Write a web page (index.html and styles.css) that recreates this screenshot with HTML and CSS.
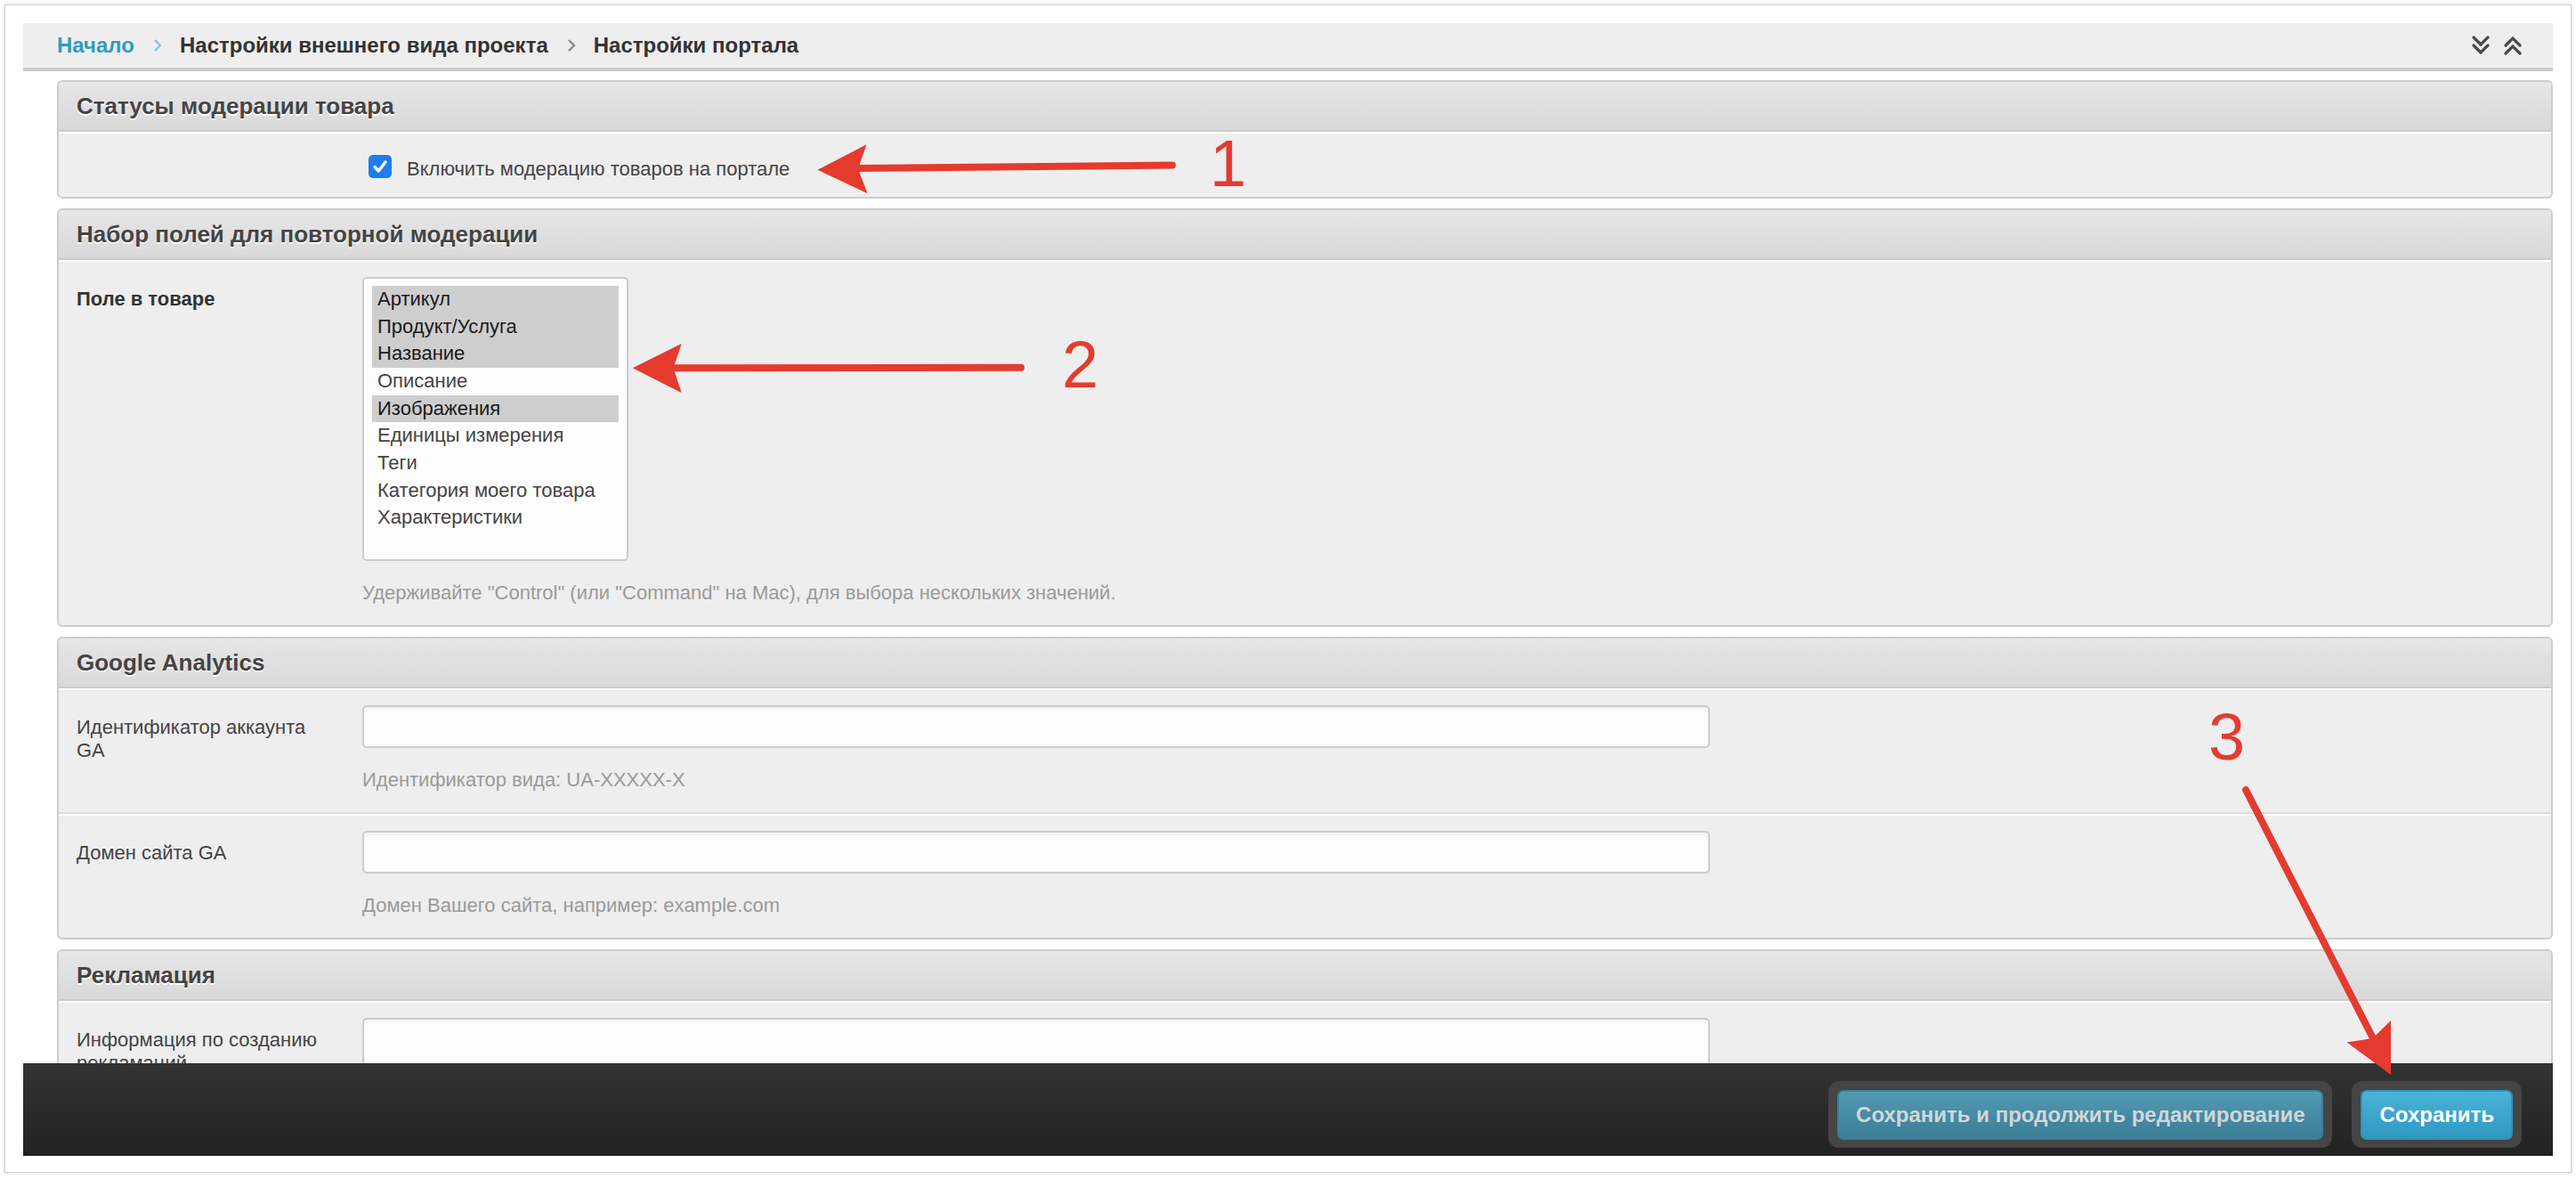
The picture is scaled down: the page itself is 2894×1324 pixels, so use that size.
FILE: index.html
```html
<!DOCTYPE html>
<html lang="ru">
<head>
<meta charset="utf-8">
<title>Настройки портала</title>
<link rel="stylesheet" href="styles.css">
</head>
<body>
<div class="frame">
  <div class="breadcrumbs">
    <div class="crumbs">
      <span class="crumb-home">Начало</span>
      <svg class="sep sep-blue" viewBox="0 0 10 14" width="10" height="14"><polyline points="2,1 8,7 2,13" fill="none" stroke-width="2.4"/></svg>
      <span>Настройки внешнего вида проекта</span>
      <svg class="sep" viewBox="0 0 10 14" width="10" height="14"><polyline points="2,1 8,7 2,13" fill="none" stroke-width="2.4"/></svg>
      <span>Настройки портала</span>
    </div>
    <div class="tools">
      <svg class="tool" viewBox="0 0 22 22" width="22" height="22"><polyline points="3,2 11,10 19,2" /><polyline points="3,11 11,19 19,11" /></svg>
      <svg class="tool" viewBox="0 0 22 22" width="22" height="22"><polyline points="3,11 11,3 19,11" /><polyline points="3,20 11,12 19,20" /></svg>
    </div>
  </div>

  <div class="viewport">
    <div class="content">
      <div class="module">
        <h2>Статусы модерации товара</h2>
        <div class="row check-row">
          <div class="label"></div>
          <div class="field check-line">
            <span class="checkbox"><svg viewBox="0 0 26 26" width="26" height="26"><polyline points="7,13.5 11.3,18 19,8" fill="none" stroke="#fff" stroke-width="3.4" stroke-linecap="round" stroke-linejoin="round"/></svg></span>
            <span class="check-text">Включить модерацию товаров на портале</span>
          </div>
        </div>
      </div>

      <div class="module">
        <h2>Набор полей для повторной модерации</h2>
        <div class="row">
          <div class="label bold">Поле в товаре</div>
          <div class="field">
            <div class="select">
              <div class="option sel">Артикул</div>
              <div class="option sel">Продукт/Услуга</div>
              <div class="option sel">Название</div>
              <div class="option">Описание</div>
              <div class="option sel">Изображения</div>
              <div class="option">Единицы измерения</div>
              <div class="option">Теги</div>
              <div class="option">Категория моего товара</div>
              <div class="option">Характеристики</div>
            </div>
            <p class="help">Удерживайте "Control" (или "Command" на Mac), для выбора нескольких значений.</p>
          </div>
        </div>
      </div>

      <div class="module">
        <h2>Google Analytics</h2>
        <div class="row">
          <div class="label">Идентификатор аккаунта GA</div>
          <div class="field">
            <div class="input"></div>
            <p class="help">Идентификатор вида: UA-XXXXX-X</p>
          </div>
        </div>
        <div class="row">
          <div class="label">Домен сайта GA</div>
          <div class="field">
            <div class="input"></div>
            <p class="help">Домен Вашего сайта, например: example.com</p>
          </div>
        </div>
      </div>

      <div class="module">
        <h2>Рекламация</h2>
        <div class="row">
          <div class="label">Информация по созданию рекламаций</div>
          <div class="field">
            <div class="input textarea"></div>
          </div>
        </div>
      </div>
    </div>
  </div>

  <div class="submit-row">
    <div class="btn-frame"><span class="btn btn-continue">Сохранить и продолжить редактирование</span></div>
    <div class="btn-frame"><span class="btn btn-save">Сохранить</span></div>
  </div>
</div>

<svg class="annotations" viewBox="0 0 2894 1324" width="2894" height="1324">
  <g fill="#e53b2f" stroke="#e53b2f">
    <line x1="1317" y1="185.5" x2="962" y2="189" stroke-width="8" stroke-linecap="round"/>
    <polygon points="918.5,190.7 973.6,162.3 964,189.5 974.6,217.3" stroke="none"/>
    <line x1="1147" y1="412.7" x2="755" y2="413.3" stroke-width="8" stroke-linecap="round"/>
    <polygon points="710.6,413.3 765.7,386 756.5,413.3 765.7,441" stroke="none"/>
    <line x1="2523" y1="887" x2="2667" y2="1168" stroke-width="8" stroke-linecap="round"/>
    <polygon points="2686,1207 2636.7,1170.5 2665.5,1166 2686,1146" stroke="none"/>
  </g>
  <g class="num" fill="#e53b2f">
    <text x="1359" y="209">1</text>
    <text x="1193" y="435">2</text>
    <text x="2481" y="853">3</text>
  </g>
</svg>
</body>
</html>
```

FILE: styles.css
```css
html, body {
  margin: 0;
}

body {
  padding: 5px;
  background: #ffffff;
  font-family: "Liberation Sans", Arial, sans-serif;
  position: relative;
}

.frame {
  border: 1px solid #d2d2d2;
  box-shadow: 0 0 4px rgba(0, 0, 0, 0.18);
  padding: 20px 20px 18px 20px;
  background: #ffffff;
}

/* breadcrumbs */
.breadcrumbs {
  height: 50px;
  background: #eeeeee;
  border-bottom: 4px solid #cccccc;
  display: flex;
  align-items: center;
  padding: 0 34px 0 38px;
  font-size: 24px;
  font-weight: bold;
  color: #333333;
}

.crumbs {
  display: flex;
  align-items: center;
  flex: 1;
}

.crumb-home {
  color: #309bbf;
}

.sep {
  margin: 0 20px 0 21px;
  stroke: #8a8a8a;
}

.sep-blue {
  stroke: #8cc3d8;
}

.tools {
  display: flex;
  gap: 14px;
}

.tool {
  fill: none;
  stroke: #4a4a4a;
  stroke-width: 3.2;
  stroke-linecap: round;
  stroke-linejoin: miter;
}

/* content */
.viewport {
  height: 1114px;
  overflow: hidden;
}

.content {
  padding: 10px 0 0 38px;
}

.module {
  border: 2px solid #cccccc;
  border-radius: 6px;
  margin-bottom: 11px;
  background: #eeeeee;
  overflow: hidden;
}

.module h2 {
  margin: 0;
  height: 54px;
  line-height: 54px;
  padding: 0 20px;
  font-size: 26px;
  font-weight: bold;
  color: #444444;
  text-shadow: 0 2px 0 #ffffff;
  background: linear-gradient(#e6e6e6, #d9d9d9);
  border-bottom: 2px solid #cccccc;
}

.row {
  display: flex;
  padding: 17px 20px 23px 20px;
  border-top: 2px solid #ffffff;
}

.row:not(:last-child) {
  border-bottom: 2px solid #dddddd;
}

.row.check-row {
  padding-bottom: 16px;
}

.label {
  width: 280px;
  margin-right: 41px;
  flex: none;
  padding-top: 12px;
  line-height: 26px;
  font-size: 22px;
  color: #444444;
}

.label.bold {
  font-weight: bold;
  color: #333333;
}

.field {
  flex: 1;
}

.check-line {
  display: flex;
  align-items: flex-start;
  padding-top: 7px;
  height: 31px;
}

.checkbox {
  width: 26px;
  height: 26px;
  border-radius: 5px;
  background: #1f7cf3;
  margin-left: 7px;
  display: flex;
}

.check-text {
  margin-left: 17px;
  line-height: 31px;
  font-size: 22px;
  color: #444444;
}

.select {
  width: 299px;
  height: 319px;
  box-sizing: border-box;
  border: 2px solid #cccccc;
  border-radius: 5px;
  background: #fdfdfd;
  padding: 8px 9px;
}

.option {
  height: 30.67px;
  line-height: 30.67px;
  padding-left: 6px;
  font-size: 22px;
  color: #444444;
}

.option.sel {
  background: #cecece;
  color: #1a1a1a;
}

.help {
  margin: 23px 0 0 0;
  line-height: 26px;
  font-size: 22px;
  color: #9a9a9a;
}

.input {
  width: 1514px;
  height: 48px;
  box-sizing: border-box;
  border: 2px solid #cccccc;
  border-radius: 5px;
  background: #fcfcfc;
  box-shadow: inset 0 3px 3px rgba(0, 0, 0, 0.04);
}

.input.textarea {
  height: 140px;
}

/* footer */
.submit-row {
  height: 104px;
  box-sizing: border-box;
  background: linear-gradient(#333333, #222222);
  display: flex;
  justify-content: flex-end;
  align-items: flex-start;
  gap: 22px;
  padding: 20px 35px 0 0;
}

.btn-frame {
  background: #454545;
  border-radius: 12px;
  padding: 10px 10px 9px 10px;
}

.btn {
  display: block;
  height: 56px;
  box-sizing: border-box;
  padding: 0 19px;
  border-radius: 7px;
  font-size: 24px;
  font-weight: bold;
  line-height: 52px;
}

.btn-continue {
  border: 2px solid #3a7f95;
  background: linear-gradient(#5199b1, #3b7f97);
  color: #d2d6d8;
}

.btn-save {
  border: 2px solid #2f93bb;
  background: linear-gradient(#4cb3d8, #2e99c2);
  color: #ffffff;
}

/* annotation overlay */
.annotations {
  position: absolute;
  left: 0;
  top: 0;
  pointer-events: none;
}

.num text {
  font-family: "Liberation Sans", Arial, sans-serif;
  font-size: 74px;
}
```
